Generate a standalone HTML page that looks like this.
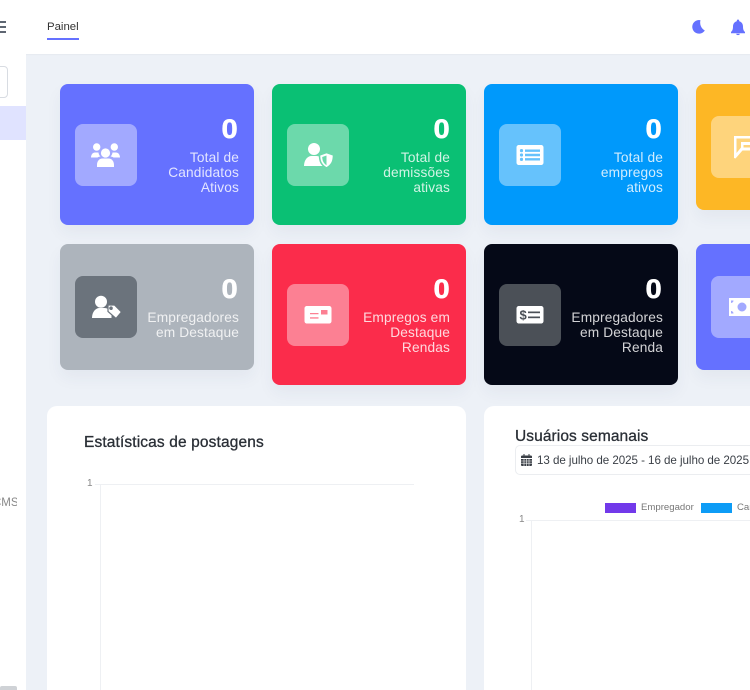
<!DOCTYPE html>
<html lang="pt"><head><meta charset="utf-8"><title>Painel</title>
<style>
html,body{margin:0;padding:0;width:750px;height:690px;overflow:hidden;background:#edf1f7;font-family:"Liberation Sans",sans-serif}
.a{position:absolute}
#hd{left:0;top:0;width:750px;height:54px;background:#fff;box-shadow:0 1px 1px rgba(0,0,0,.03)}
#sb{left:0;top:54px;width:26px;height:636px;background:#fff}
.c{position:absolute;width:194px;border-radius:8px;box-shadow:0 8px 16px rgba(40,50,90,.05)}
.b{position:absolute;left:15px;width:62px;height:62px;border-radius:8px;background:rgba(255,255,255,.4)}
.b svg{position:absolute;left:16px;top:16px;width:30px;height:30px;fill:#fff}
.n{position:absolute;right:16px;color:#fff;font-weight:700;font-size:26.500px;line-height:30px;-webkit-text-stroke:.5px #fff;transform:scaleX(1.1);transform-origin:right center}
.l{position:absolute;right:15px;color:#fff;opacity:.82;font-size:13.7px;line-height:15px;text-align:right;white-space:nowrap;letter-spacing:.15px}
.p{position:absolute;background:#fff;border-radius:10px 10px 0 0;top:406px;height:284px}
.t{position:absolute;color:#2a2f36;font-size:15.5px;line-height:18px;font-weight:400;white-space:nowrap;-webkit-text-stroke:.3px #2a2f36}
.g{position:absolute;background:#eef0f3}
.y{position:absolute;color:#888;font-size:10px;line-height:12px}
</style></head><body>
<div class="a" id="hd"></div>
<div class="a" id="sb"></div>
<div class="a" style="left:0;top:21px;width:6px;height:2px;background:#5e6672"></div>
<div class="a" style="left:0;top:26px;width:6px;height:2px;background:#5e6672"></div>
<div class="a" style="left:0;top:31px;width:6px;height:2px;background:#5e6672"></div>
<div class="a" style="left:47px;top:20px;width:32px;font-size:11.4px;line-height:15px;color:#333;white-space:nowrap">Painel</div>
<div class="a" style="left:47px;top:38px;width:32px;height:2px;background:#6571ff"></div>
<svg class="a" style="left:691px;top:19px" width="15" height="16" viewBox="0 0 15 16"><path fill="#6571ff" d="M9.500 1.200A6.800 6.800 0 1 0 13.800 11.500 9 9 0 0 1 9.500 1.200z"/></svg>
<svg class="a" style="left:730px;top:19px" width="16" height="17" viewBox="0 0 16 17"><path fill="#6571ff" d="M8 .5c.7 0 1.200.5 1.200 1.200v.5C11.600 2.800 13 4.900 13 7.500c0 2.800.6 4.300 2 5.500v1.200H1V13c1.400-1.200 2-2.700 2-5.500 0-2.600 1.400-4.700 3.800-5.300v-.5C6.800 1 7.300.5 8 .5z"/><path fill="#6571ff" d="M6.200 14.800h3.600a1.800 1.300 0 0 1-3.600 0z"/></svg>

<div class="a" style="left:-6px;top:66px;width:12px;height:30px;border:1px solid #d8dce2;border-radius:4px;background:#fff"></div>
<div class="a" style="left:0;top:106px;width:26px;height:34px;background:#e0e3ff"></div>
<div class="a" style="left:-7px;top:497px;font-size:11.5px;line-height:13px;color:#888;width:24px;overflow:hidden;white-space:nowrap">CMS</div>
<div class="a" style="left:0;top:686px;width:17px;height:4px;background:#cfd2d6;border-radius:2px 2px 0 0"></div>

<div class="c" style="left:60px;top:84px;height:141px;background:#6571ff">
 <div class="b" style="top:40px"><svg viewBox="0 0 30 30"><circle cx="5.700" cy="7" r="3.700"/><circle cx="23.300" cy="7" r="3.700"/><circle cx="14.500" cy="13" r="4.600"/><path d="M0 17.500c0-3 1.800-5 4-5h3.500c.2 1.700.9 3 2 4-1.300.2-2.200.5-3 1zM29 17.500c0-3-1.800-5-4-5h-3.500c-.2 1.700-.9 3-2 4 1.300.2 2.200.5 3 1zM6 25c0-3.800 2.200-6.500 5.500-6.500h6c3.300 0 5.500 2.700 5.500 6.500v2H6z"/></svg></div>
 <div class="n" style="top:30px">0</div>
 <div class="l" style="top:66px">Total de<br>Candidatos<br>Ativos</div>
</div>
<div class="c" style="left:272px;top:84px;height:141px;background:#0ac074">
 <div class="b" style="top:40px"><svg viewBox="0 0 30 30"><circle cx="11" cy="9" r="6"/><path d="M1 26c0-6 3.500-10 7.500-10h5c3 0 5.500 2 6.500 5v5z"/><path stroke="#6cd9ac" stroke-width="1.500" fill="#fff" d="M23.500 12.500l7 2.500c0 6-1.500 10-7 13-5.500-3-7-7-7-13z"/><path fill="#6cd9ac" d="M23.500 15.500l-4.300 1.500c.2 3.800 1.300 6.300 4.300 8.200z"/></svg></div>
 <div class="n" style="top:30px;right:16px">0</div>
 <div class="l" style="top:66px;right:16px">Total de<br>demissões<br>ativas</div>
</div>
<div class="c" style="left:484px;top:84px;height:141px;background:#0099fb">
 <div class="b" style="top:40px"><svg viewBox="0 0 30 30"><path fill-rule="evenodd" d="M4 5h22c1.500 0 2.500 1 2.500 2.500v15c0 1.500-1 2.500-2.500 2.500H4c-1.500 0-2.500-1-2.500-2.500v-15C1.500 6 2.500 5 4 5zm2.500 4a1.600 1.600 0 1 0 0 3.200 1.600 1.600 0 0 0 0-3.200zm0 4.400a1.600 1.600 0 1 0 0 3.200 1.600 1.600 0 0 0 0-3.200zm0 4.400a1.600 1.600 0 1 0 0 3.200 1.600 1.600 0 0 0 0-3.200zM10 9.500v2.400h15V9.500zm0 4.300v2.400h15v-2.400zm0 4.300v2.400h15v-2.400z"/></svg></div>
 <div class="n" style="top:30px">0</div>
 <div class="l" style="top:66px">Total de<br>empregos<br>ativos</div>
</div>
<div class="c" style="left:696px;top:84px;height:126px;background:#fdb725">
 <div class="b" style="top:32px"><svg viewBox="0 0 30 30" style="overflow:visible"><path d="M7 4h26v2.500H9.500v14.500L14 15.500V10h19v3H16.500v2.500H30v3H15.500L8.500 26.500 7 26z"/></svg></div>
</div>

<div class="c" style="left:60px;top:244px;height:126px;background:#adb4bc">
 <div class="b" style="top:32px;background:#6b737c"><svg viewBox="0 0 30 30"><circle cx="10" cy="9.700" r="6"/><path d="M1 26c0-6 3.500-10 7.500-10h5c3 0 6 2 7 5v5z"/><path stroke="#6b737c" stroke-width="1.200" fill="#fff" fill-rule="evenodd" d="M17 13h6.500l7 7-5.500 6.500-8-7zm3 2a1.200 1.200 0 1 0 0 2.400 1.200 1.200 0 0 0 0-2.400z"/></svg></div>
 <div class="n" style="top:30px">0</div>
 <div class="l" style="top:66px">Empregadores<br>em Destaque</div>
</div>
<div class="c" style="left:272px;top:244px;height:141px;background:#fb2c4b">
 <div class="b" style="top:40px"><svg viewBox="0 0 30 30"><path fill-rule="evenodd" d="M4 6h22c1.500 0 2.500 1 2.500 2.500v12.500c0 1.500-1 2.500-2.500 2.500H4c-1.500 0-2.500-1-2.500-2.500V8.500C1.500 7 2.500 6 4 6zm3 7v1.300h8.500V13zm0 4.300v1.300h8.500v-1.300zM18 10v4.500h6.500V10z"/></svg></div>
 <div class="n" style="top:30px;right:16px">0</div>
 <div class="l" style="top:66px;right:16px">Empregos em<br>Destaque<br>Rendas</div>
</div>
<div class="c" style="left:484px;top:244px;height:141px;background:#050917">
 <div class="b" style="top:40px;background:#4b5057"><svg viewBox="0 0 30 30"><path d="M4 6h22c1.500 0 2.500 1 2.500 2.500v12.500c0 1.500-1 2.500-2.500 2.500H4c-1.500 0-2.500-1-2.500-2.500V8.500C1.500 7 2.500 6 4 6z"/><rect x="13" y="11.500" width="12" height="1.700" fill="#4b5057"/><rect x="13" y="16.500" width="12" height="1.700" fill="#4b5057"/><text x="4.500" y="19.500" font-size="13" font-weight="700" font-family="Liberation Sans" fill="#4b5057">$</text></svg></div>
 <div class="n" style="top:30px">0</div>
 <div class="l" style="top:66px">Empregadores<br>em Destaque<br>Renda</div>
</div>
<div class="c" style="left:696px;top:244px;height:126px;background:#6571ff">
 <div class="b" style="top:32px"><svg viewBox="0 0 30 30" style="overflow:visible"><path fill-rule="evenodd" d="M2 6h30v18H2zm13 4.500a4.500 4.500 0 1 0 0 9 4.500 4.500 0 0 0 0-9zM4 8.500V11a2.500 2.500 0 0 0 2.500-2.500zM4 19v2.500h2.500A2.500 2.500 0 0 0 4 19z"/></svg></div>
</div>

<div class="p" style="left:47px;width:419px"></div>
<div class="p" style="left:484px;width:280px"></div>

<div class="t" style="left:84px;top:434px;letter-spacing:.13px">Estatísticas de postagens</div>
<div class="y" style="left:87px;top:478px">1</div>
<div class="g" style="left:95px;top:484px;width:319px;height:1px"></div>
<div class="g" style="left:100px;top:484px;width:1px;height:206px"></div>

<div class="t" style="left:515px;top:428px;letter-spacing:.09px">Usuários semanais</div>
<div class="a" style="left:515px;top:445px;width:260px;height:28px;border:1px solid #ebedf0;border-radius:5px;background:#fff"></div>
<svg class="a" style="left:521px;top:454px" width="11" height="12" viewBox="0 0 11 12"><path fill="#3a3f46" d="M2.500 0h1v1.500h4V0h1v1.500h1.500c.5 0 1 .5 1 1V4H0V2.500c0-.5.500-1 1-1h1.500zM0 5h11v6c0 .5-.5 1-1 1H1c-.5 0-1-.5-1-1z"/><path stroke="#fff" stroke-width=".6" d="M0 7h11M0 9.200h11M3 5v7M5.500 5v7M8 5v7"/></svg>
<div class="a" style="left:537px;top:453px;font-size:11.6px;line-height:15px;color:#3a3f46;white-space:nowrap;letter-spacing:-.05px">13 de julho de 2025 - 16 de julho de 2025</div>
<div class="a" style="left:605px;top:503px;width:31px;height:10px;background:#7239ea"></div>
<div class="a" style="left:641px;top:502px;font-size:9.6px;line-height:12px;color:#777;white-space:nowrap">Empregador</div>
<div class="a" style="left:701px;top:503px;width:31px;height:10px;background:#0d9cf6"></div>
<div class="a" style="left:737px;top:502px;font-size:9.6px;line-height:12px;color:#777;white-space:nowrap">Candidato</div>
<div class="y" style="left:519px;top:514px">1</div>
<div class="g" style="left:526px;top:520px;width:224px;height:1px"></div>
<div class="g" style="left:531px;top:520px;width:1px;height:170px"></div>
</body></html>
